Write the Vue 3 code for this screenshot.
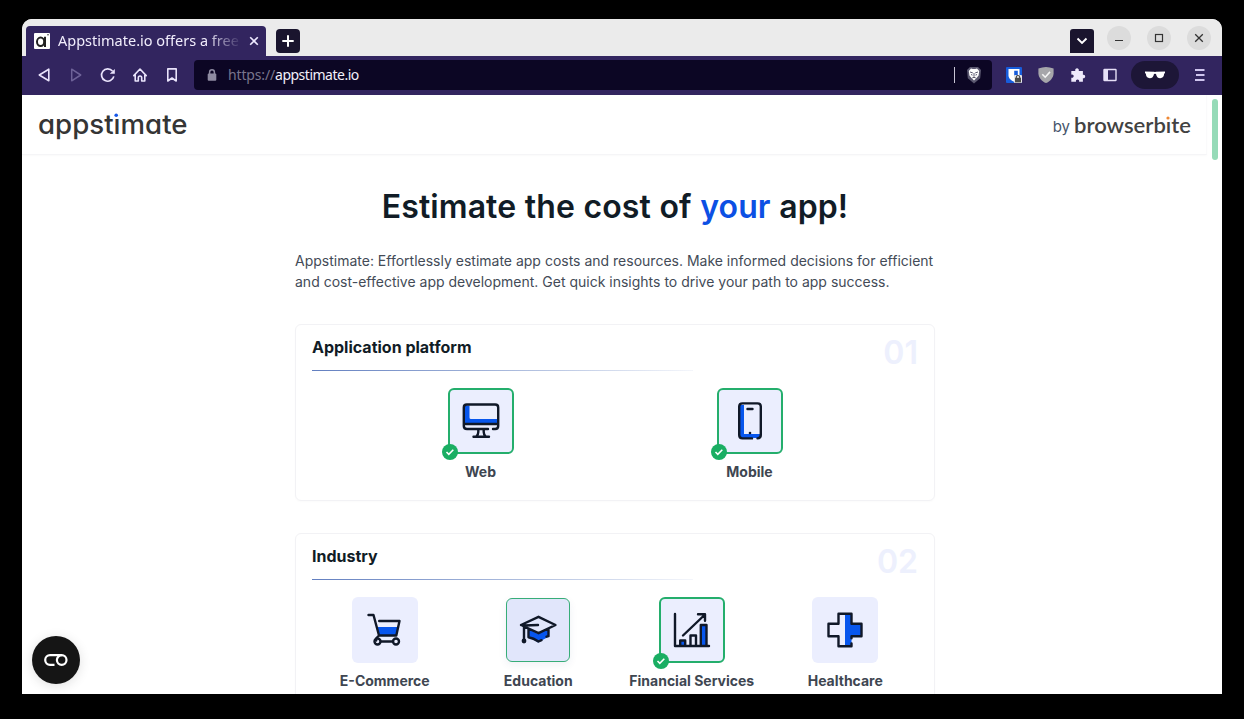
<script setup>
const platforms = [
  { name: 'Web', icon: 'web', state: 'selected' },
  { name: 'Mobile', icon: 'mobile', state: 'selected' }
]
const industries = [
  { name: 'E-Commerce', icon: 'cart', state: '' },
  { name: 'Education', icon: 'education', state: 'hovered' },
  { name: 'Financial Services', icon: 'chart', state: 'selected' },
  { name: 'Healthcare', icon: 'health', state: '' }
]
const sections = [
  { title: 'Application platform', number: '01', items: platforms, kind: 'two' },
  { title: 'Industry', number: '02', items: industries, kind: 'four' }
]
</script>

<template>
  <div class="desktop">
    <div class="window">
      <div class="tabstrip">
        <div class="tab">
          <svg class="favicon" width="16" height="16" viewBox="0 0 16 16">
            <rect width="16" height="16" rx="1" fill="#fff" />
            <ellipse cx="6.600" cy="8.800" rx="3.600" ry="4.200" fill="none" stroke="#222" stroke-width="2" />
            <path d="M11 3.800V14" stroke="#222" stroke-width="2" />
            <circle cx="14" cy="1.800" r=".8" fill="#333" />
          </svg>
          <span class="tab-title">Appstimate.io offers a free</span>
          <svg class="tab-close" width="10" height="10" viewBox="0 0 10 10"><path d="M1.200 1.200l7.600 7.600M8.800 1.200L1.200 8.800" stroke="#eee9ff" stroke-width="1.600" /></svg>
        </div>
        <div class="newtab">
          <svg width="12" height="12" viewBox="0 0 12 12"><path d="M6 .3v11.400M.3 6h11.400" stroke="#fff" stroke-width="2" /></svg>
        </div>
        <div class="controls">
          <div class="chev"><svg width="12" height="8" viewBox="0 0 12 8"><path d="M1.500 1.500L6 6l4.500-4.500" fill="none" stroke="#fff" stroke-width="1.900" /></svg></div>
          <div class="ctl"><svg width="24" height="24" viewBox="0 0 24 24"><path d="M8 14.500h8" stroke="#333" stroke-width="1.200" /></svg></div>
          <div class="ctl"><svg width="24" height="24" viewBox="0 0 24 24"><rect x="8.500" y="8.500" width="7" height="7" fill="none" stroke="#333" stroke-width="1.200" /></svg></div>
          <div class="ctl"><svg width="24" height="24" viewBox="0 0 24 24"><path d="M8.200 8.200l7.600 7.600M15.800 8.200l-7.600 7.600" stroke="#333" stroke-width="1.300" /></svg></div>
        </div>
      </div>

      <div class="toolbar">
        <div class="nav">
          <svg viewBox="0 0 16 16"><path d="M12.800 2.200v11.600L3.300 8z" fill="none" stroke="#e9e3fb" stroke-width="1.600" stroke-linejoin="round" /></svg>
          <svg viewBox="0 0 16 16"><path d="M3.700 2.200v11.600L12.700 8z" fill="none" stroke="#6e6298" stroke-width="1.500" stroke-linejoin="round" /></svg>
          <svg viewBox="0 0 16 16"><path d="M13.800 9.400A6.200 6.200 0 1 1 12.500 4" fill="none" stroke="#e9e3fb" stroke-width="1.700" /><path d="M14.800 1.900v4.900H9.800z" fill="#e9e3fb" /></svg>
          <svg viewBox="0 0 16 16"><path d="M1.800 8.600L8 2l6.200 6.600M3.200 7.300v6.700h3.100v-3.300a1.700 1.700 0 0 1 3.400 0V14h3.100V7.300" fill="none" stroke="#e9e3fb" stroke-width="1.600" stroke-linejoin="round" stroke-linecap="round" /></svg>
          <svg viewBox="0 0 16 16"><path d="M3.800 1.900h8.400V14L8 11l-4.200 3z" fill="none" stroke="#e9e3fb" stroke-width="1.600" stroke-linejoin="round" /></svg>
        </div>
        <div class="address">
          <svg class="lock" width="10" height="12" viewBox="0 0 10 12"><rect x=".7" y="4.500" width="8.600" height="7.200" rx="1" fill="#8e8ba1" /><path d="M2.600 5V3.200a2.400 2.400 0 0 1 4.800 0V5" fill="none" stroke="#8e8ba1" stroke-width="1.500" /></svg>
          <span class="url"><span class="scheme">https://</span>appstimate.io</span>
          <span class="divider"></span>
          <svg class="lion" width="16" height="18" viewBox="0 0 16 18">
            <path d="M4 1h8l3 3-.8 8.200L8 17.500 1.800 12.200 1 4z" fill="#5b5870" />
            <path d="M5 2.500l1.800.6h2.400l1.800-.6L13.200 5l-.6 4.500-2.100 2.400L8 14.400l-2.500-2.500-2.100-2.400L2.800 5z" fill="#fff" />
            <path d="M4 6l2.800.9M12 6l-2.800.9M5 8.500l1.500.6M11 8.500l-1.500.6M8 7v3.500M6.300 12L8 11l1.700 1" stroke="#5b5870" stroke-width="1" />
          </svg>
        </div>
        <div class="extensions">
          <svg viewBox="0 0 16 16"><rect width="16" height="16" rx="1" fill="#175ddc" /><path d="M2.500 2h11v6.500c0 3-2.800 5-5.500 6.200-2.700-1.200-5.500-3.200-5.500-6.200z" fill="#fff" /><path d="M8.200 3.700h3.600v4.900c0 1.700-1.800 3.200-3.600 4z" fill="#175ddc" /><rect x="8" y="8" width="8" height="8" rx="1" fill="#e7e7e7" /><rect x="9" y="10.800" width="6" height="4.600" fill="#4b4b4b" /><path d="M10.300 11v-.8a1.700 1.700 0 0 1 3.400 0v.8" fill="none" stroke="#4b4b4b" stroke-width="1.200" /></svg>
          <svg viewBox="0 0 16 16"><path d="M8 0c2.500 0 5 .5 7.600 1.500v4.700C15.600 10.500 12 14.500 8 16 4 14.500.4 10.500.4 6.200V1.500C3 .5 5.500 0 8 0z" fill="#a6a6aa" /><path d="M4.300 7.300l2.900 2.900 4.800-5.300" fill="none" stroke="#f5f5f5" stroke-width="1.600" /></svg>
          <svg viewBox="0 0 16 16"><path d="M1.300 4h4c-1-3.600 4.400-3.600 3.500 0h4.100v3.800c3.100-.8 3.100 4.100 0 3.500v3.500H9.100c.8-3-3.900-3-3.100 0H1.300v-4c3.200.7 3.200-4 0-3.100z" fill="#eee9fb" /></svg>
          <svg viewBox="0 0 16 16"><rect x="2" y="2.500" width="12" height="11" rx=".5" fill="none" stroke="#e6e0f7" stroke-width="1.400" /><path d="M2 2.500h4v11H2z" fill="#e6e0f7" /></svg>
        </div>
        <div class="private">
          <svg width="22" height="10" viewBox="0 0 22 10"><path d="M1 1.500l9.200.3q.8.400 1.600 0L21 1.500v1.800l-.8.300C20 6.500 18.700 8.300 16.200 8.300c-2.300 0-3.700-1.400-4.200-4.200q-1-.6-2 0c-.5 2.800-1.900 4.200-4.200 4.200C3.300 8.300 2 6.500 1.800 3.600L1 3.300z" fill="#fff" /></svg>
        </div>
        <svg class="menu" width="10" height="14" viewBox="0 0 10 14"><path d="M0 2h9.500M1 7h8.500M0 12h9.500" stroke="#cfc5ee" stroke-width="2" /></svg>
      </div>

      <div class="page">
        <header class="site-header">
          <svg class="logo" width="152" height="40" viewBox="0 0 152 40">
            <text class="logo-text" x="0" y="28.500" textLength="149.500" lengthAdjust="spacingAndGlyphs">appstimate</text>
            <rect x="75" y="6" width="6" height="7" fill="#fff" /><circle cx="78.200" cy="10.200" r="1.800" fill="#1556e8" />
          </svg>
          <div class="byline">
            <span class="by">by</span>
            <svg width="118" height="40" viewBox="0 0 118 40">
              <text class="brand-text" x="0" y="27.500" textLength="117" lengthAdjust="spacingAndGlyphs">browserbite</text>
              <rect x="91.500" y="9" width="5" height="6.200" fill="#fff" /><circle cx="94" cy="13" r="1.600" fill="#ef8733" />
            </svg>
          </div>
        </header>
        <div class="scrollbar"></div>

        <main>
          <h1>Estimate the cost of <em>your</em> app!</h1>
          <p class="intro">Appstimate: Effortlessly estimate app costs and resources. Make informed decisions for efficient<br>and cost-effective app development. Get quick insights to drive your path to app success.</p>

          <section v-for="s in sections" :key="s.number" class="card">
            <h2>{{ s.title }}</h2>
            <span class="number">{{ s.number }}</span>
            <div class="rule"></div>
            <div class="options" :class="s.kind">
              <div v-for="o in s.items" :key="o.name" class="option">
                <div class="tile" :class="o.state">
                  <svg class="icon" width="40" height="40" viewBox="0 0 40 40" fill="none" stroke="#101828" stroke-width="2.400" stroke-linecap="round" stroke-linejoin="round">
                    <template v-if="o.icon === 'web'">
                      <path d="M3 4.500h5.500v12q0 1.500 1.500 1.500h27v4.500H3z" fill="#0756ed" stroke="none" />
                      <path d="M27 28h-21q-3.200 0-3.200-3V6.500q0-3 3-3h28.400q3 0 3 3v18.500q0 3-3 3h-2.200M3 23h34M17.300 28v3q0 2.500-2 4.500M22.700 28v3q0 2.500 2 4.500M12.500 35.700h15.500" />
                    </template>
                    <template v-else-if="o.icon === 'mobile'">
                      <path d="M10 4h4v29H30v4H10z" fill="#0756ed" stroke="none" />
                      <path d="M22 37.400h-9.500q-3.300 0-3.300-3.300V5.600q0-3.200 3.300-3.200h15q3.300 0 3.300 3.200v28.500q0 3.200-3.300 3.300M17.500 8h5" /><circle cx="20" cy="32" r="1.300" fill="#101828" stroke="none" />
                    </template>
                    <template v-else-if="o.icon === 'cart'">
                      <path d="M12.500 17h20.500l-2 8.500H14z" fill="#0756ed" stroke="none" />
                      <path d="M3.500 5h5l5.500 20.500h17.300L34.500 11H14.200M14 25.500l-2.500 2.500q-1 1.200-.3 2.500M16 31.500h12" /><circle cx="12.500" cy="31.500" r="3" /><circle cx="31" cy="31.500" r="3" />
                    </template>
                    <template v-else-if="o.icon === 'education'">
                      <path d="M10 18.500v9q5 1.500 10 5l10-5.500v-8.500l-10 5.500z" fill="#0756ed" stroke="none" />
                      <path d="M3 15L20.500 6.800 37.500 15 20.500 23.200 3 15l3.500.5L20 15M10.500 19v8.200q5 .8 10 4.300l3-1.300M30.500 19v7.200l-2 .5M6 16v14" /><circle cx="6" cy="31" r="2.400" fill="#101828" stroke="none" />
                    </template>
                    <template v-else-if="o.icon === 'chart'">
                      <path d="M9 31h4v5H9zM29.500 15h5v20h-5z" fill="#0756ed" stroke="none" />
                      <path d="M3 4v32h34M8.200 36v-5.500h5V36M18.500 36V25.500h5.500V36M28.800 36V15h5.700v21M11 25.500L32.500 5M26 4.300h7v6.500" />
                    </template>
                    <template v-else>
                      <path d="M20 4h6.500v10h10.200v12H26.500v10H20z" fill="#0756ed" stroke="none" />
                      <path d="M26.500 33.500v2.700h-13V26.200h-10V13.800h10V3.700h13v10.100h10v12.400h-10v2" />
                    </template>
                  </svg>
                  <span v-if="o.state === 'selected'" class="check">
                    <svg width="10" height="8" viewBox="0 0 10 8"><path d="M1.500 4l2.300 2.300L8.300 1.800" fill="none" stroke="#fff" stroke-width="1.600" /></svg>
                  </span>
                </div>
                <span class="label">{{ o.name }}</span>
              </div>
            </div>
          </section>
        </main>
        <div class="consent">
          <svg width="26" height="14" viewBox="0 0 26 14" fill="none" stroke="#fff" stroke-width="2.200"><path d="M11.500 11.800H7A4.800 4.800 0 0 1 7 2.200h12" /><circle cx="18.700" cy="7" r="4.800" /></svg>
        </div>
      </div>
    </div>
  </div>
</template>

<style>
body { margin: 0; background: #000; overflow: hidden; }
</style>
<style scoped>
* { box-sizing: border-box; }
svg { display: block; flex: none; }
.desktop { width: 1244px; height: 719px; padding: 19px 22px 25px; background: #000; font-family: Inter, sans-serif; }
.window { width: 1200px; height: 675px; border-radius: 10px 10px 0 0; overflow: hidden; background: #fff; }
.tabstrip { height: 37px; background: #ebebeb; display: flex; padding-left: 4px; }
.tab { width: 240px; height: 30px; margin-top: 7px; background: #32255f; border-radius: 4px 4px 0 0; display: flex; align-items: center; padding: 0 7px 0 8px; }
.tab-title { font: 14.500px/20px "Noto Sans", sans-serif; width: 184px; margin: -2px 0 0 8px; white-space: nowrap; overflow: hidden; color: #f1edfc; -webkit-mask-image: linear-gradient(90deg, #000 80%, transparent 100%); mask-image: linear-gradient(90deg, #000 80%, transparent 100%); }
.tab-close { margin-left: 7px; }
.newtab { width: 24px; height: 24px; margin: 10px 0 0 10px; border-radius: 4px; background: #1a152e; display: grid; place-items: center; }
.controls { margin-left: auto; display: flex; padding-right: 11px; }
.chev { width: 24px; height: 24px; margin: 10px 13px 0 0; background: #1a152e; border-radius: 3px 3px 0 0; display: grid; place-items: center; }
.ctl { width: 24px; height: 24px; border-radius: 50%; background: #dcdcdc; margin: 7px 0 0 16px; }
.chev + .ctl { margin-left: 0; }
.toolbar { height: 39px; background: #32255f; display: flex; align-items: center; padding: 0 0 1px 14px; }
.nav { display: flex; gap: 16px; width: 158px; }
.nav svg { width: 16px; height: 16px; }
.address { width: 798px; height: 30px; border-radius: 4px; background: #0c0624; display: flex; align-items: center; padding: 0 10px 0 13px; }
.url { margin-left: 11px; font: 14px/20px "Noto Sans", sans-serif; color: #f3f0fa; letter-spacing: -.5px; }
.scheme { color: #79758c; letter-spacing: -.15px; }
.divider { width: 1px; height: 16px; background: #c8c4d4; margin: 0 11px 0 auto; }
.extensions { display: flex; gap: 16px; margin-left: 14px; }
.extensions svg { width: 16px; height: 16px; }
.private { width: 48px; height: 28px; border-radius: 14px; background: #1d1637; margin-left: 13px; display: grid; place-items: center; }
.menu { margin-left: 16px; }
.page { height: 599px; position: relative; overflow: hidden; background: #fff; }
.site-header { width: 1185px; height: 60px; border-bottom: 1px solid #f5f5f7; border-right: 1px solid #fafafb; display: flex; justify-content: space-between; padding: 10px 14px 0 16px; box-shadow: 0 1px 2px rgba(20,20,50,.025); }
.logo-text { font: 500 27px Inter, sans-serif; font-feature-settings: "cv11"; fill: #353535; }
.byline { display: flex; }
.by { font-size: 15px; line-height: 20px; color: #46556a; margin: 12px 4px 0 0; }
.brand-text { font: 600 21px Lato, sans-serif; fill: #424242; }
.scrollbar { position: absolute; top: 4px; right: 4px; width: 6px; height: 61px; border-radius: 3px; background: #96dbb8; }
main { width: 640px; margin-left: 273px; }
h1 { margin: 31px 0 0; text-align: center; font-size: 32px; line-height: 42px; letter-spacing: .08px; word-spacing: .5px; font-variation-settings: "opsz" 14; font-weight: 600; color: #111c26; white-space: nowrap; }
h1 em { font-style: normal; color: #0c50e4; }
.intro { margin: 22px 0 32px; font-size: 14px; line-height: 21px; color: #434b57; white-space: nowrap; }
.card { position: relative; height: 177px; border: 1px solid #f2f2f5; border-radius: 6px; margin-bottom: 32px; padding: 11px 16px; box-shadow: 0 1px 2px rgba(30,30,70,.02); }
h2 { margin: 0; font-size: 16px; line-height: 22px; font-weight: 700; color: #111c26; }
.rule { height: 1px; width: 381px; margin-top: 12px; background: linear-gradient(90deg, #627fc0, #b5c3e1 60%, #f4f6fb); }
.number { position: absolute; right: 16px; top: 8px; font-size: 32px; line-height: 40px; font-variation-settings: "opsz" 14; font-weight: 600; color: #edf0fd; }
.options { display: grid; margin-top: 17px; }
.two { grid-template-columns: repeat(2, 269px); margin-left: 34px; }
.four { grid-template-columns: repeat(4, 153.500px); margin-left: -4px; }
.option { display: flex; flex-direction: column; align-items: center; }
.tile { position: relative; width: 66px; height: 66px; border-radius: 6px; background: #ebeefe; display: grid; place-items: center; }
.selected { border: 2px solid #24ae6c; }
.hovered { width: 64px; height: 64px; margin: 1px; background: #e1e6fb; border: 1px solid #37ad78; box-shadow: 0 3px 8px rgba(30,50,110,.07); }
.check { position: absolute; left: -8px; bottom: -8px; width: 16px; height: 16px; border-radius: 50%; background: #1aae63; display: grid; place-items: center; }
.label { margin-top: 8px; font-size: 14px; line-height: 20px; font-weight: 700; color: #3e4651; white-space: nowrap; }
.consent { position: absolute; left: 10px; bottom: 10px; width: 48px; height: 48px; border-radius: 50%; background: #151515; display: grid; place-items: center; box-shadow: 0 2px 12px rgba(0,0,0,.12); }
</style>
